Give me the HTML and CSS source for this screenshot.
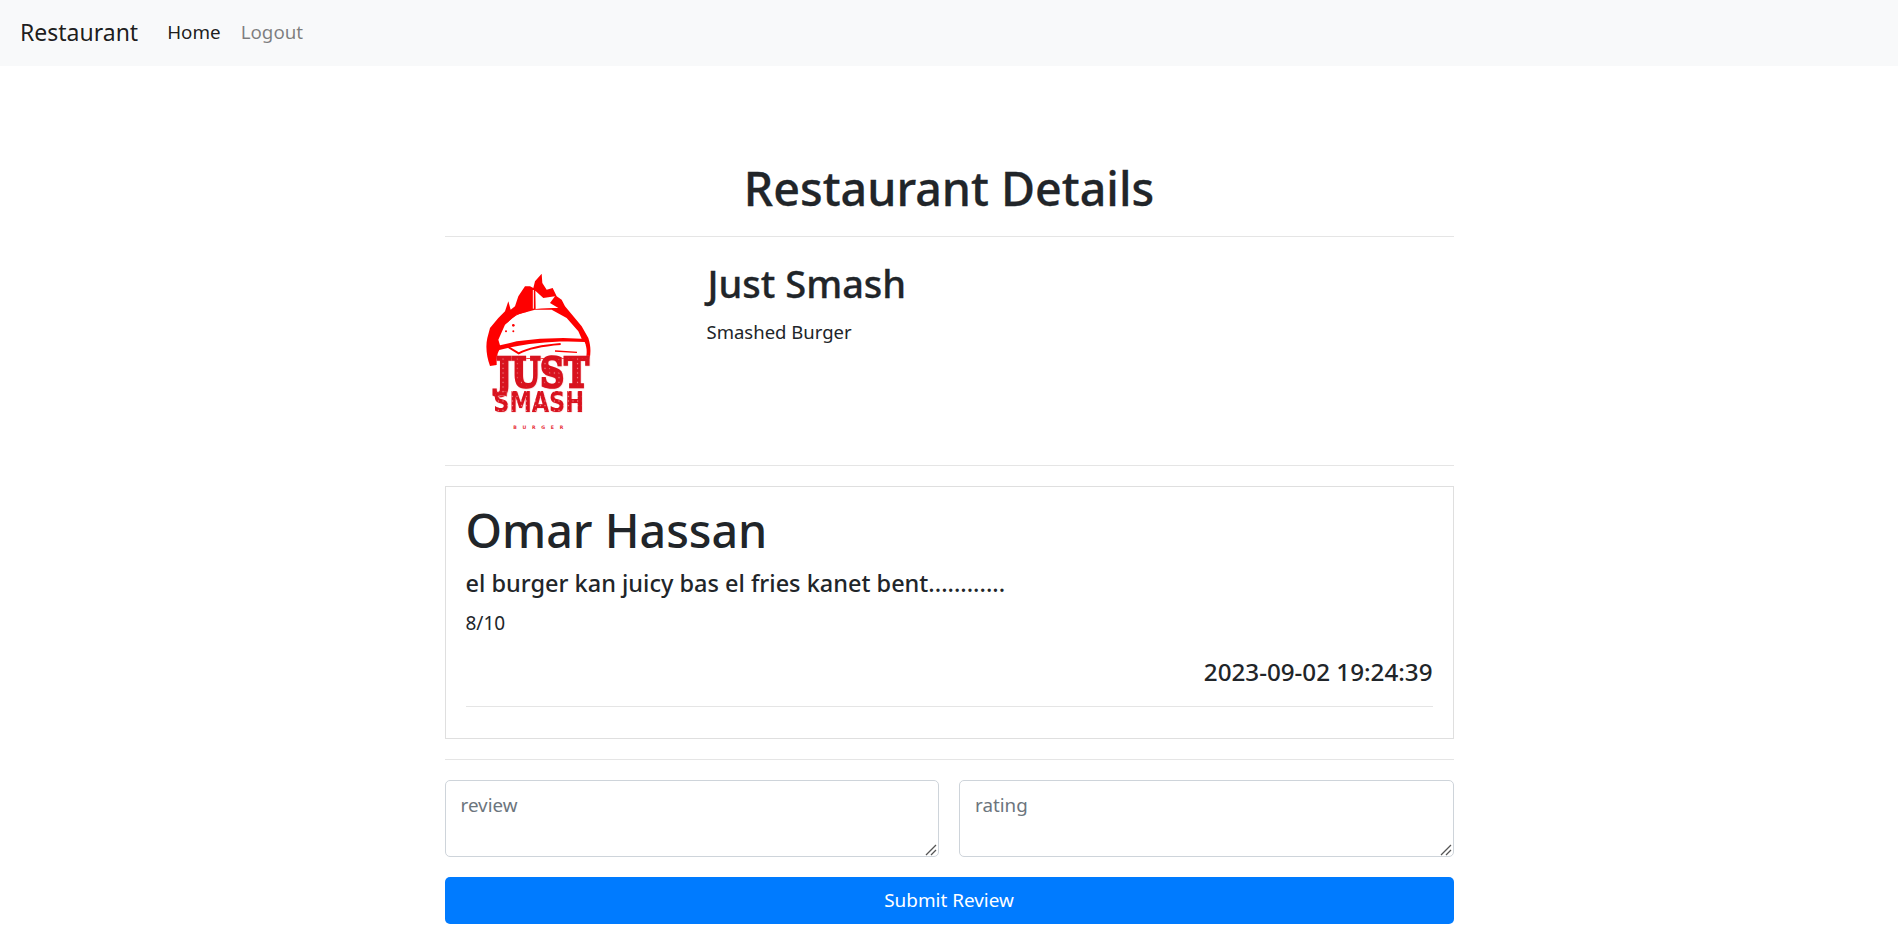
FILE: index.html
```html
<!DOCTYPE html>
<html lang="en">
<head>
  <meta charset="UTF-8">
  <title>Restaurant Details</title>
  <link rel="stylesheet" href="styles.css">
</head>
<body>

<nav class="navbar">
  <a href="#" class="brand">Restaurant</a>
  <a href="#" class="nav-link active">Home</a>
  <a href="#" class="nav-link">Logout</a>
</nav>

<div class="container">
  <h1 class="page-title">Restaurant Details</h1>
  <hr class="title-line">

  <div class="restaurant">
    <div class="logo">
      <svg width="240" height="208" viewBox="15 -9 720 624">
        <defs>
          <pattern id="dots" width="14" height="14" patternUnits="userSpaceOnUse">
            <rect width="14" height="14" fill="#d8121e"/>
            <circle cx="7" cy="7" r="1.8" fill="#f7a9ad"/>
          </pattern>
        </defs>
        <!-- flame -->
        <path fill="#fe0000" d="M150 378 C140 350 136 320 142 294 L150 264 L175 234 L195 214 L205 184 L212 209 L225 199 L235 169 L255 139 L270 139 L280 144 L285 124 L305 101 L307 129 L320 149 L338 144 L350 169 L365 179 L375 199 L400 229 L425 259 L445 294 C452 315 453 335 449 356 L170 356 L170 375 Z"/>
        <!-- flag -->
        <path fill="#fff" d="M286 152 L310 174 L345 169 L330 189 L355 204 C332 204 308 204 287 207 Z"/>
        <path fill="none" stroke="#fff" stroke-width="3" d="M280 150 L280 206"/>
        <!-- bun -->
        <path fill="#fff" d="M180 316 L175 299 L195 254 L230 224 L285 209 L335 209 L380 234 L415 274 L425 296 L370 294 L300 296 L230 304 Z"/>
        <path fill="none" stroke="#fe0000" stroke-width="2.5" d="M200 248 C218 228 240 218 262 214"/>
        <circle cx="220" cy="256" r="4" fill="#fe0000"/>
        <circle cx="198" cy="274" r="3" fill="#fe0000"/>
        <circle cx="220" cy="274" r="3" fill="#fe0000"/>
        <!-- patty -->
        <path fill="#fff" d="M178 330 C250 310 350 300 434 306 C440 320 442 336 438 354 L172 354 C171 346 173 338 178 330 Z"/>
        <path fill="none" stroke="#fe0000" stroke-width="6" d="M200 318 L236 340 C270 322 310 316 362 312"/>
        <path fill="none" stroke="#fe0000" stroke-width="4" d="M345 333 L411 337"/>
        <!-- name -->
        <text x="168" y="440" class="logo-just" fill="url(#dots)" textLength="278" lengthAdjust="spacingAndGlyphs">JUST</text>
        <text x="160" y="515" class="logo-smash" fill="url(#dots)" textLength="272" lengthAdjust="spacingAndGlyphs">SMASH</text>
        <text x="220" y="566" class="logo-burger" textLength="150">BURGER</text>
      </svg>
    </div>
    <div class="restaurant-info">
      <h2>Just Smash</h2>
      <p>Smashed Burger</p>
    </div>
  </div>
  <hr>

  <div class="review-card">
    <h1 class="review-name">Omar Hassan</h1>
    <h4 class="review-text">el burger kan juicy bas el fries kanet bent............</h4>
    <p class="review-rating">8/10</p>
    <h5 class="review-date">2023-09-02 19:24:39</h5>
    <hr>
  </div>
  <hr>

  <form class="review-form">
    <div class="form-row">
      <textarea class="form-control" placeholder="review"></textarea>
      <textarea class="form-control" placeholder="rating"></textarea>
    </div>
    <button type="button" class="submit-btn">Submit Review</button>
  </form>
</div>

</body>
</html>
```

FILE: styles.css
```css
* {
  box-sizing: border-box;
}
html, body {
  height: 927px;
  overflow: hidden;
}
body {
  margin: 0;
  background: #fff;
  color: #212529;
  font-family: "Noto Sans", "Open Sans", sans-serif;
  font-size: 16px;
  line-height: 1.5;
}
a {
  text-decoration: none;
}
hr {
  border: 0;
  border-top: 1px solid rgba(0,0,0,0.1);
  margin: 20px 0;
}
h1, h2, h4, h5, p {
  margin: 0;
}
.navbar {
  height: 66px;
  background: #f8f9fa;
  display: flex;
  align-items: center;
  padding: 0 16px 1px;
  gap: 20px;
}
.brand {
  color: rgba(0,0,0,0.9);
  font-size: 23px;
  margin-right: 5px;
  padding: 0 4px;
}
.nav-link {
  color: rgba(0,0,0,0.5);
  font-size: 18.8px;
}
.nav-link.active {
  color: rgba(0,0,0,0.9);
}
.container {
  width: 1009px;
  margin: 0 auto;
  padding-top: 94px;
}
.page-title {
  font-size: 46.6px;
  font-weight: 500;
  -webkit-text-stroke: 0.3px #212529;
  line-height: 56px;
  text-align: center;
}
.title-line {
  margin: 20px 0 0;
}
.restaurant {
  display: flex;
  height: 208px;
}
.logo {
  width: 262px;
}
.logo-just {
  font: 700 122px "DejaVu Serif", serif;
  stroke: #d8121e;
  stroke-width: 8px;
  filter: drop-shadow(1px 1px 0 #f6b4b6);
}
.logo-smash {
  font: 700 86px "DejaVu Sans", sans-serif;
  filter: drop-shadow(1px 1px 0 #f6b4b6);
}
.logo-burger {
  font: 700 14px "DejaVu Sans", sans-serif;
  fill: #e8303a;
}
.restaurant-info {
  padding-top: 24px;
}
.restaurant-info h2 {
  font-size: 38px;
  font-weight: 500;
  -webkit-text-stroke: 0.3px #212529;
  line-height: 45px;
  margin-bottom: 12px;
  padding-left: 1px;
}
.restaurant-info p {
  font-size: 18.5px;
}
.review-card {
  border: 1px solid rgba(0,0,0,0.125);
  height: 253px;
  padding: 15px 20px 0;
}
.review-name {
  font-size: 46.6px;
  font-weight: 500;
  line-height: 56px;
  margin-bottom: 11px;
}
.review-text {
  font-size: 23.5px;
  font-weight: 500;
  line-height: 28px;
  margin-bottom: 12px;
}
.review-rating {
  font-size: 19px;
  line-height: 28px;
  margin-bottom: 20px;
}
.review-date {
  font-size: 24.2px;
  font-weight: 500;
  line-height: 29px;
  text-align: right;
}
.review-card hr {
  margin: 20px 0 0;
}
.form-row {
  display: flex;
  gap: 20px;
  margin-bottom: 20px;
}
.form-control {
  flex: 1;
  height: 77px;
  border: 1px solid #ced4da;
  border-radius: 5px;
  padding: 10px 15px;
  font: inherit;
  font-size: 18.8px;
  color: #495057;
  resize: vertical;
}
.form-control::placeholder {
  color: #6c757d;
}
.form-control::-webkit-resizer {
  background: url("data:image/svg+xml,%3Csvg xmlns='http://www.w3.org/2000/svg' width='15' height='15'%3E%3Cpath d='M3 14L13 4M8 14L13 9' stroke='%23555' stroke-width='1.3' fill='none'/%3E%3C/svg%3E") no-repeat;
}
.submit-btn {
  display: block;
  width: 100%;
  height: 47px;
  background: #007bff;
  color: #fff;
  border: 0;
  border-radius: 5px;
  font: inherit;
  font-size: 18.9px;
}
```
